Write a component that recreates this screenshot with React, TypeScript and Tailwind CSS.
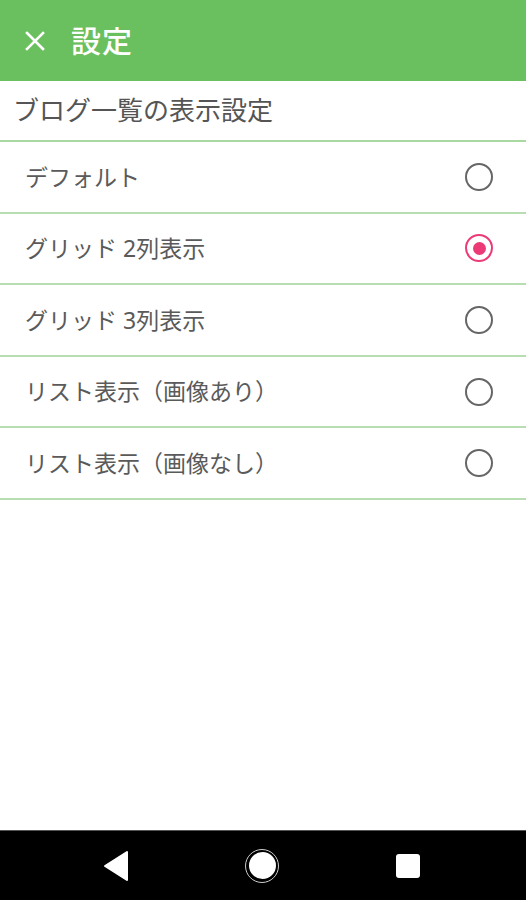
const options = [
  'デフォルト',
  'グリッド 2列表示',
  'グリッド 3列表示',
  'リスト表示（画像あり）',
  'リスト表示（画像なし）',
];

function Radio({ checked }: { checked: boolean }) {
  if (checked) {
    return (
      <div className="w-[28px] h-[28px] rounded-full border-[2.5px] border-[#ec3a78] flex items-center justify-center">
        <div className="w-[13px] h-[13px] rounded-full bg-[#ec3a78]" />
      </div>
    );
  }
  return <div className="w-[28px] h-[28px] rounded-full border-[2.5px] border-[#666666]" />;
}

export default function App() {
  const selected = 1;
  return (
    <div
      className="w-[526px] h-[900px] flex flex-col bg-white"
      style={{ fontFamily: '"Noto Sans", "Noto Sans CJK JP", sans-serif' }}
    >
      <header className="h-[81px] bg-[#6abf5f] flex items-center pl-[24px]">
        <svg width="22" height="22" viewBox="0 0 22 22" className="mr-[25px]">
          <path d="M3 3 L19 19 M19 3 L3 19" stroke="white" strokeWidth="2.6" strokeLinecap="square" />
        </svg>
        <h1 className="text-white text-[30px] font-medium tracking-[1px]">設定</h1>
      </header>

      <div className="h-[61px] flex items-center pl-[13px] border-b-2 border-[#a9d8a1]">
        <span className="text-[#555555] text-[26px]">ブログ一覧の表示設定</span>
      </div>

      <ul>
        {options.map((label, i) => (
          <li
            key={label}
            className="h-[71.6px] flex items-center justify-between pl-[25px] pr-[33px] border-b-2 border-[#b7deb0]"
          >
            <span className="text-[#5a5a5a] text-[23px]">{label}</span>
            <Radio checked={i === selected} />
          </li>
        ))}
      </ul>

      <div className="flex-1" />

      <nav className="h-[70px] bg-black border-t border-[#555555] flex items-center justify-center">
        <div className="w-[526px] flex items-center">
          <svg width="26" height="32" viewBox="0 0 26 32" className="ml-[103px]">
            <path d="M24 2 L24 30 L2 16 Z" fill="white" stroke="white" strokeWidth="2" strokeLinejoin="round" />
          </svg>
          <div className="ml-[116px] w-[34px] h-[34px] rounded-full border-[1.5px] border-[#cccccc] flex items-center justify-center">
            <div className="w-[27px] h-[27px] rounded-full bg-white" />
          </div>
          <div className="ml-[117px] w-[24px] h-[24px] rounded-[3px] bg-white" />
        </div>
      </nav>
    </div>
  );
}
